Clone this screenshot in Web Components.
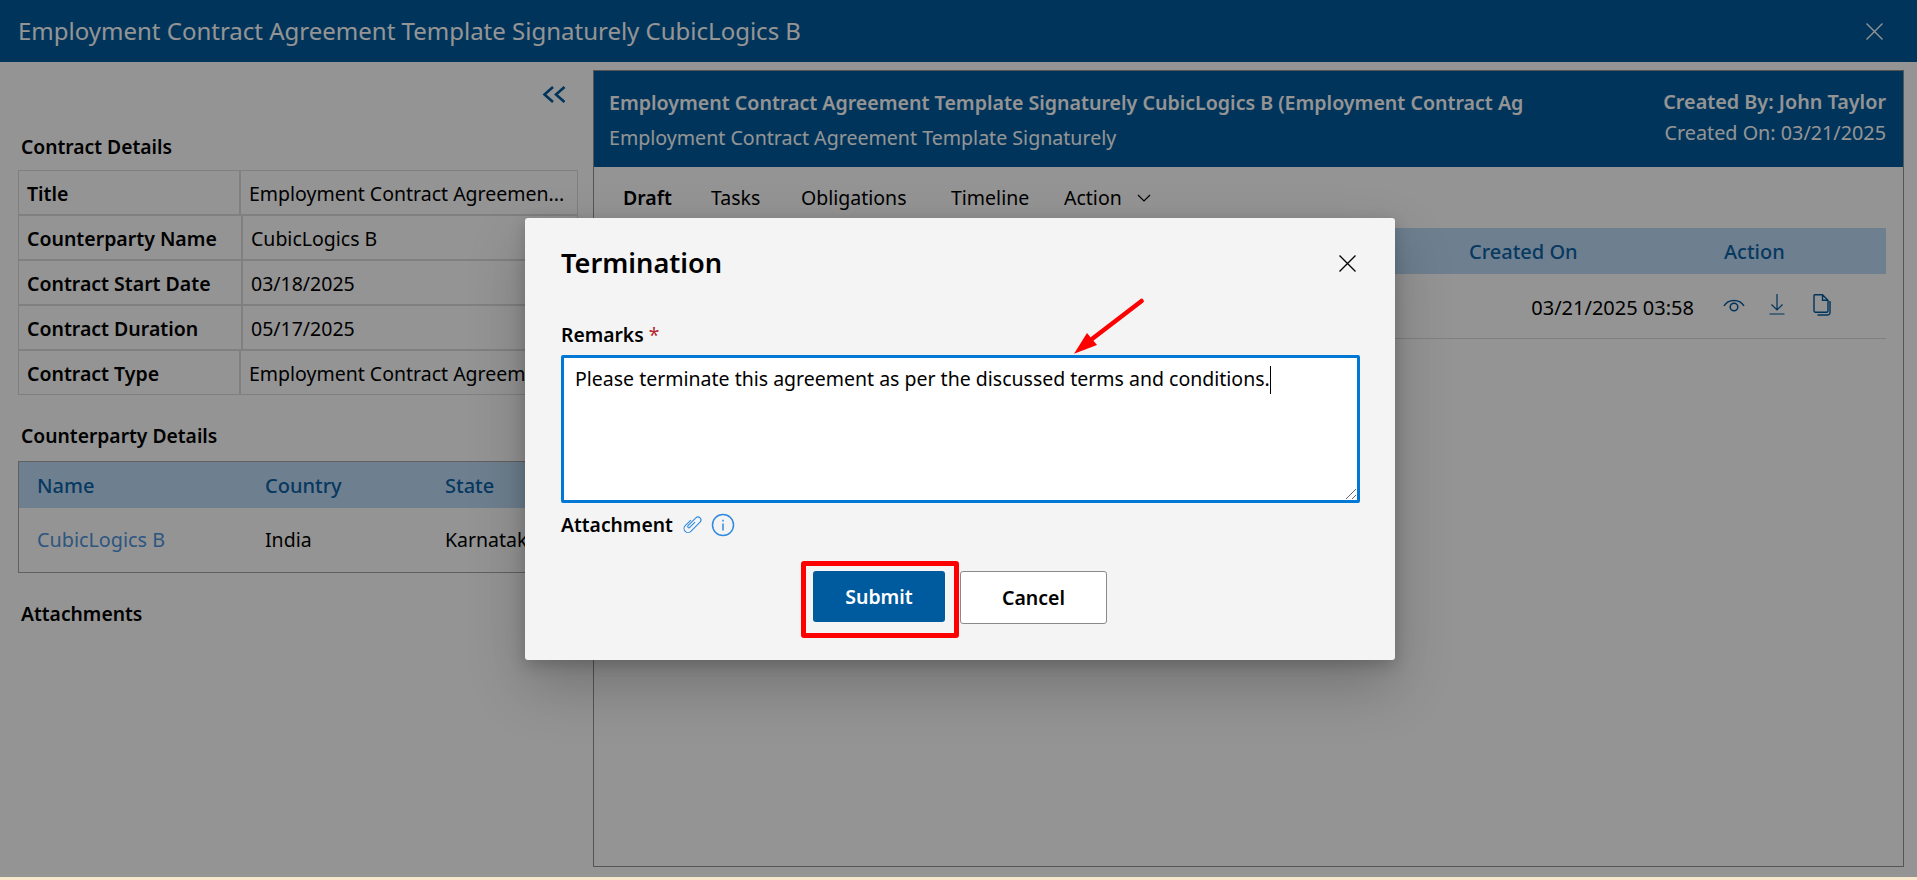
<!DOCTYPE html>
<html lang="en">
<head>
<meta charset="utf-8">
<title>Employment Contract Agreement Template Signaturely CubicLogics B</title>
<style>
  html, body { margin: 0; height: 100%; overflow: hidden; background: #fff; color: #000; }
  body { font: 400 19.5px "Noto Sans", "Open Sans", sans-serif; display: flex; flex-direction: column; }
</style>
</head>
<body>
<contract-page>
  <top-bar slot="top">Employment Contract Agreement Template Signaturely CubicLogics B</top-bar>

  <contract-sidebar slot="side">
    <section-heading>Contract Details</section-heading>
    <detail-row label="Title" value="Employment Contract Agreemen..."></detail-row>
    <detail-row label="Counterparty Name" value="CubicLogics B" wide></detail-row>
    <detail-row label="Contract Start Date" value="03/18/2025" wide></detail-row>
    <detail-row label="Contract Duration" value="05/17/2025" wide></detail-row>
    <detail-row label="Contract Type" value="Employment Contract Agreemen..."></detail-row>
    <section-heading style="margin-top:28px">Counterparty Details</section-heading>
    <counterparty-table></counterparty-table>
    <section-heading style="margin-top:28px">Attachments</section-heading>
  </contract-sidebar>

  <contract-panel slot="main">
    <panel-header>
      <span slot="title">Employment Contract Agreement Template Signaturely CubicLogics B (Employment Contract Ag</span>
      <span slot="subtitle">Employment Contract Agreement Template Signaturely</span>
      <span slot="by">Created By: John Taylor</span>
      <span slot="on">Created On: 03/21/2025</span>
    </panel-header>
    <panel-tabs></panel-tabs>
    <draft-table></draft-table>
  </contract-panel>

  <modal-overlay slot="overlay">
    <termination-dialog></termination-dialog>
  </modal-overlay>
</contract-page>
<window-edge></window-edge>

<script>
// Page frame: top bar, then sidebar + panel, with the modal overlay on top
class ContractPage extends HTMLElement {
  constructor() {
    super();
    this.attachShadow({ mode: 'open' });
  }

  connectedCallback() {
    this.shadowRoot.innerHTML = `
      <style>
        :host { display: flex; flex-direction: column; height: 877px; position: relative; }
        .body { flex: 1; display: flex; min-height: 0; }
      </style>
      <slot name="top"></slot>
      <div class="body">
        <slot name="side"></slot>
        <slot name="main"></slot>
      </div>
      <slot name="overlay"></slot>
    `;
  }
}

class WindowEdge extends HTMLElement {
  constructor() {
    super();
    this.attachShadow({ mode: 'open' });
  }

  connectedCallback() {
    this.shadowRoot.innerHTML = `
      <style>
        :host { display: block; height: 3px; background: #f8e9cd; }
      </style>
    `;
  }
}

class TopBar extends HTMLElement {
  constructor() {
    super();
    this.attachShadow({ mode: 'open' });
  }

  connectedCallback() {
    this.shadowRoot.innerHTML = `
      <style>
        :host {
          display: flex;
          align-items: center;
          justify-content: space-between;
          flex: none;
          box-sizing: border-box;
          height: 62px;
          padding: 0 34px 0 18px;
          background: #005a9e;
          color: #fff;
          font-size: 24px;
        }
        .text { margin-top: -2px; }
        svg { display: block; }
      </style>
      <span class="text"><slot></slot></span>
      <svg width="17" height="17" viewBox="0 0 17 17" fill="none" stroke="#fff" stroke-width="1.4">
        <path d="M.5 .5l16 16M16.5 .5l-16 16"/>
      </svg>
    `;
  }
}

class ContractSidebar extends HTMLElement {
  constructor() {
    super();
    this.attachShadow({ mode: 'open' });
  }

  connectedCallback() {
    this.shadowRoot.innerHTML = `
      <style>
        :host { display: block; flex: none; width: 560px; padding: 24px 15px 0 18px; }
        .collapse { display: flex; justify-content: flex-end; padding-right: 12px; margin-bottom: 31px; }
        svg { display: block; }
      </style>
      <div class="collapse">
        <svg width="24" height="17" viewBox="0 0 24 17" fill="none" stroke="#005a9e" stroke-width="2.6">
          <path d="M11 1L2.500 8.500 11 16M22.500 1L14 8.500 22.500 16"/>
        </svg>
      </div>
      <slot></slot>
    `;
  }
}

class SectionHeading extends HTMLElement {
  constructor() {
    super();
    this.attachShadow({ mode: 'open' });
  }

  connectedCallback() {
    this.shadowRoot.innerHTML = `
      <style>
        :host { display: block; font-weight: 600; font-size: 19.3px; line-height: 26px; padding-left: 3px; margin-bottom: 10px; }
      </style>
      <slot></slot>
    `;
  }
}

// One label/value line of the contract details
class DetailRow extends HTMLElement {
  constructor() {
    super();
    this.attachShadow({ mode: 'open' });
  }

  connectedCallback() {
    const labelWidth = this.hasAttribute('wide') ? 223 : 221;
    this.shadowRoot.innerHTML = `
      <style>
        :host {
          display: grid;
          grid-template-columns: ${labelWidth}px 1fr;
          height: 43px;
          border: 1px solid #ddd;
          line-height: 41px;
        }
        .label, .value { padding-top: 2px; }
        .label { font-weight: 600; padding-left: 8px; border-right: 1px solid #ddd; }
        .value { padding-left: 8px; border-left: 1px solid #ddd; white-space: nowrap; overflow: hidden; }
      </style>
      <div class="label">${this.getAttribute('label')}</div>
      <div class="value">${this.getAttribute('value')}</div>
    `;
  }
}

class CounterpartyTable extends HTMLElement {
  constructor() {
    super();
    this.attachShadow({ mode: 'open' });
  }

  connectedCallback() {
    this.shadowRoot.innerHTML = `
      <style>
        :host { display: block; border: 1px solid #a6a6a6; margin-top: 12px; }
        .row { display: grid; grid-template-columns: 228px 180px 1fr; padding-left: 18px; align-items: center; }
        .head { height: 46px; background: #bedbf6; color: #0b62a8; font-weight: 500; font-size: 20px; }
        .body { height: 63px; padding-bottom: 1px; }
        .link { color: #4f94dc; font-size: 19.8px; }
      </style>
      <div class="row head"><span>Name</span><span>Country</span><span>State</span></div>
      <div class="row body"><span class="link">CubicLogics B</span><span>India</span><span>Karnataka</span></div>
    `;
  }
}

class ContractPanel extends HTMLElement {
  constructor() {
    super();
    this.attachShadow({ mode: 'open' });
  }

  connectedCallback() {
    this.shadowRoot.innerHTML = `
      <style>
        :host { display: flex; flex-direction: column; flex: 1; min-width: 0; margin: 8px 13px 10px 0; border: 1px solid #939393; }
      </style>
      <slot></slot>
    `;
  }
}

class PanelHeader extends HTMLElement {
  constructor() {
    super();
    this.attachShadow({ mode: 'open' });
  }

  connectedCallback() {
    this.shadowRoot.innerHTML = `
      <style>
        :host {
          display: flex;
          justify-content: space-between;
          flex: none;
          height: 96px;
          background: #005a9e;
          color: #fff;
          white-space: nowrap;
        }
        .left { padding: 14px 0 0 15px; line-height: 35px; font-size: 19.6px; }
        .right { padding: 15px 17px 0 0; line-height: 31px; text-align: right; font-size: 19.8px; }
        .strong { font-weight: 600; }
      </style>
      <div class="left">
        <div class="strong"><slot name="title"></slot></div>
        <div><slot name="subtitle"></slot></div>
      </div>
      <div class="right">
        <div class="strong"><slot name="by"></slot></div>
        <div><slot name="on"></slot></div>
      </div>
    `;
  }
}

class PanelTabs extends HTMLElement {
  constructor() {
    super();
    this.attachShadow({ mode: 'open' });
  }

  connectedCallback() {
    this.shadowRoot.innerHTML = `
      <style>
        :host {
          display: grid;
          grid-template-columns: 88px 90px 150px 113px auto;
          align-items: center;
          flex: none;
          height: 61px;
          padding-left: 29px;
        }
        .active { font-weight: 600; }
        .action { display: flex; align-items: center; gap: 15px; }
        svg { display: block; }
      </style>
      <span class="active">Draft</span>
      <span>Tasks</span>
      <span>Obligations</span>
      <span>Timeline</span>
      <span class="action">Action
        <svg width="14" height="8" viewBox="0 0 14 8" fill="none" stroke="#000" stroke-width="1.2"><path d="M1 1l6 6 6-6"/></svg>
      </span>
    `;
  }
}

class DraftTable extends HTMLElement {
  constructor() {
    super();
    this.attachShadow({ mode: 'open' });
  }

  connectedCallback() {
    this.shadowRoot.innerHTML = `
      <style>
        :host { display: block; margin: 0 17px 0 16px; }
        .row { display: grid; grid-template-columns: 1fr 255px 162px; align-items: center; }
        .head { height: 46px; background: #bedbf6; color: #0b62a8; font-weight: 500; font-size: 20px; }
        .item { height: 62px; padding-top: 2px; border-bottom: 1px solid #ddd; }
        .date { text-align: right; padding-right: 30px; font-size: 20px; }
        .icons { display: flex; align-items: center; margin-left: -1px; }
        svg { display: block; fill: none; stroke: #005a9e; }
      </style>
      <div class="row head"><span></span><span>Created On</span><span>Action</span></div>
      <div class="row item">
        <span></span>
        <span class="date">03/21/2025 03:58</span>
        <span class="icons">
          <svg width="22" height="14" viewBox="0 0 22 14" stroke-width="1.5" style="margin:-5px 24px 0 0">
            <path d="M1 8C5 .5 17 .5 21 8"/><circle cx="11" cy="9" r="3.800"/>
          </svg>
          <svg width="16" height="21" viewBox="0 0 16 21" stroke-width="1.2" style="margin:-6px 28px 0 0">
            <path d="M8 0v16M2.500 10.500L8 16l5.500-5.500M.5 20h15"/>
          </svg>
          <svg width="18" height="22" viewBox="0 0 18 22" stroke-width="1.4" style="margin-top:-5px">
            <path d="M2.500 .8h7l5.500 5.500v10.500a1.500 1.500 0 0 1-1.500 1.500h-11a1.500 1.500 0 0 1-1.500-1.500v-15a1.500 1.500 0 0 1 1.500-1.500zM9.500 .8v5.500h5.500"/>
            <path d="M17 7v11.500a2.500 2.500 0 0 1-2.500 2.500h-10"/>
          </svg>
        </span>
      </div>
    `;
  }
}

class ModalOverlay extends HTMLElement {
  constructor() {
    super();
    this.attachShadow({ mode: 'open' });
  }

  connectedCallback() {
    this.shadowRoot.innerHTML = `
      <style>
        :host {
          position: absolute;
          inset: 0;
          display: grid;
          place-items: center;
          padding-left: 3px;
          background: rgba(0, 0, 0, .42);
        }
      </style>
      <slot></slot>
    `;
  }
}

class TerminationDialog extends HTMLElement {
  constructor() {
    super();
    this.attachShadow({ mode: 'open' });
  }

  connectedCallback() {
    this.shadowRoot.innerHTML = `
      <style>
        :host {
          display: block;
          position: relative;
          box-sizing: border-box;
          width: 870px;
          padding: 25px 35px 36px 36px;
          background: #f4f4f4;
          border-radius: 3px;
          box-shadow: 0 25.6px 57.6px rgba(0, 0, 0, .22), 0 4.8px 14.4px rgba(0, 0, 0, .18);
        }
        .title { display: flex; justify-content: space-between; align-items: center; height: 40px; margin-bottom: 39px; }
        h2 { margin: 0; font-size: 27.2px; font-weight: 600; }
        .close { margin: 2px 4px 0 0; display: block; }
        .label { font-weight: 600; line-height: 26px; font-size: 19.3px; }
        .req { color: #b3262e; font-weight: 400; }
        .field {
          position: relative;
          box-sizing: border-box;
          height: 148px;
          margin-top: 7px;
          padding: 7px 11px;
          line-height: 28px;
          background: #fff;
          border: 3px solid #0078d4;
          border-radius: 2px;
        }
        .caret { display: inline-block; width: 1.5px; height: 28px; background: #000; vertical-align: -8px; }
        .grip { position: absolute; right: 0; bottom: 0; display: block; }
        .attach { display: flex; align-items: center; margin-top: 9px; height: 26px; }
        .attach svg { display: block; fill: none; stroke: #2f8be0; }
        .actions { display: flex; justify-content: center; align-items: flex-start; gap: 15px; margin-top: 33px; padding-right: 1px; }
        .btn { box-sizing: border-box; display: grid; place-items: center; font-weight: 600; border-radius: 3px; }
        .submit { position: relative; width: 132px; height: 51px; background: #005a9e; color: #fff; }
        .cancel { width: 147px; height: 53px; background: #fff; border: 1px solid #8a8a8a; }
        .mark {
          position: absolute;
          inset: -10px -14px -16px -12px;
          border: 5px solid #f00;
          border-radius: 3px;
        }
        .arrow { position: absolute; left: 545px; top: 79px; display: block; }
      </style>
      <div class="title">
        <h2>Termination</h2>
        <svg class="close" width="17" height="17" viewBox="0 0 17 17" fill="none" stroke="#000" stroke-width="1.3">
          <path d="M.5 .5l16 16M16.5 .5l-16 16"/>
        </svg>
      </div>
      <div class="label">Remarks <span class="req">*</span></div>
      <div class="field">Please terminate this agreement as per the discussed terms and conditions.<span class="caret"></span>
        <svg class="grip" width="14" height="14" viewBox="0 0 14 14" fill="none" stroke="#666" stroke-width="1">
          <path d="M3 13L13 3M9 13l4-4"/>
        </svg>
      </div>
      <div class="attach">
        <span class="label">Attachment</span>
        <svg width="20" height="20" viewBox="-10 -10 20 20" stroke-width="1.1" style="margin-left:10px">
          <g transform="rotate(45)">
            <path d="M-5-2V6a4 4 0 0 0 8 0V-7a3 3 0 0 0-6 0V4a1.200 1.200 0 0 0 2.400 0V-3.500"/>
          </g>
        </svg>
        <svg width="24" height="24" viewBox="0 0 24 24" stroke-width="1.5" style="margin-left:8px">
          <circle cx="12" cy="12" r="10.500"/>
          <path d="M12 10.500V17.500M12 6.800v1.800"/>
        </svg>
      </div>
      <div class="actions">
        <div class="btn submit">Submit<span class="mark"></span></div>
        <div class="btn cancel">Cancel</div>
      </div>
      <svg class="arrow" width="76" height="60" viewBox="0 0 76 60">
        <path d="M71.600 4L22 42" stroke="#f00" stroke-width="4.500" stroke-linecap="round"/>
        <path d="M4 56.700L17 36 22 42 27 48z" fill="#f00"/>
      </svg>
    `;
  }
}

customElements.define('contract-page', ContractPage);
customElements.define('window-edge', WindowEdge);
customElements.define('top-bar', TopBar);
customElements.define('contract-sidebar', ContractSidebar);
customElements.define('section-heading', SectionHeading);
customElements.define('detail-row', DetailRow);
customElements.define('counterparty-table', CounterpartyTable);
customElements.define('contract-panel', ContractPanel);
customElements.define('panel-header', PanelHeader);
customElements.define('panel-tabs', PanelTabs);
customElements.define('draft-table', DraftTable);
customElements.define('modal-overlay', ModalOverlay);
customElements.define('termination-dialog', TerminationDialog);
</script>
</body>
</html>
